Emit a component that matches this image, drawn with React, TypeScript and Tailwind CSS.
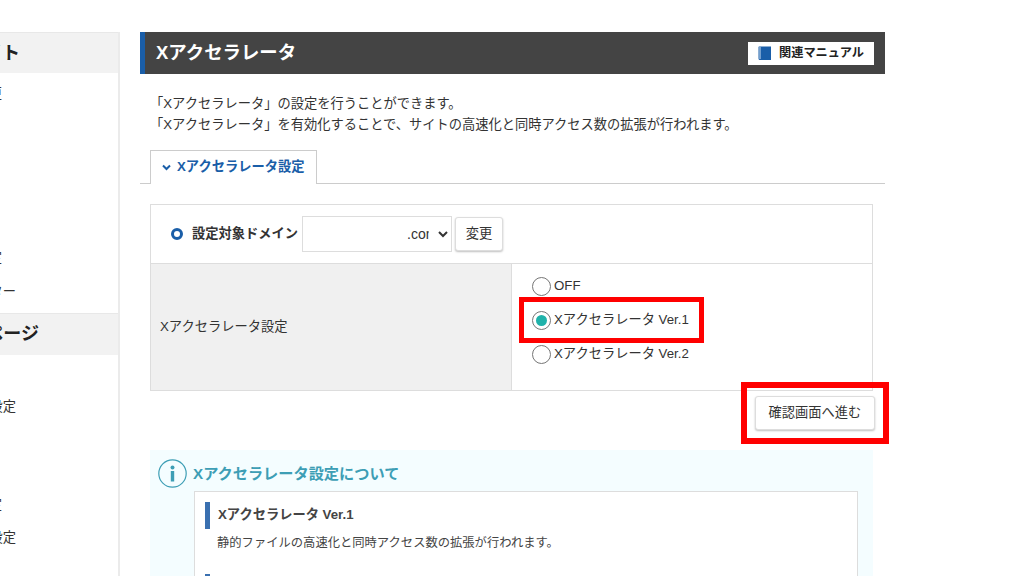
import React from 'react';

const font = 'font-["Liberation_Sans","Noto_Sans_CJK_JP",sans-serif]';

function SideHead({ text, right, tall }: { text: string; right: number; tall?: boolean }) {
  return (
    <div
      className={`flex items-center justify-end overflow-hidden whitespace-nowrap bg-[#f2f2f2] text-[18px] font-bold text-[#222] ${tall ? 'h-[41px]' : 'h-[40px]'}`}
      style={{ paddingRight: right }}
    >
      {text}
    </div>
  );
}

function SideItem({ text, right, className }: { text: string; right: number; className: string }) {
  return (
    <div
      className={`flex h-[20px] items-center justify-end overflow-hidden whitespace-nowrap text-[13.25px] text-[#333] ${className}`}
      style={{ paddingRight: right }}
    >
      {text}
    </div>
  );
}

function Radio({ label, checked }: { label: string; checked?: boolean }) {
  return (
    <label className="flex h-[20px] items-center gap-[3px] text-[13.25px] text-[#333]">
      <span className="flex h-[19px] w-[19px] items-center justify-center rounded-full border border-[#767676] bg-white">
        {checked && <span className="h-[11px] w-[11px] rounded-full bg-[#20b2aa]" />}
      </span>
      {label}
    </label>
  );
}

export default function App() {
  return (
    <div className={`flex h-[576px] w-[1024px] overflow-hidden bg-white ${font}`}>
      {/* sidebar, cut off at the left edge */}
      <aside className="mt-[32px] h-[544px] w-[120px] shrink-0 border-r-2 border-[#ebebeb]">
        <div className="border-t border-[#e8e8e8]">
          <SideHead text="サイト" right={98} />
        </div>
        <SideItem text="サイト変更" right={116} className="mt-[11px]" />
        <SideItem text="設定" right={116} className="mt-[144px]" />
        <SideItem text="アクセスフィルター" right={102} className="mt-[14px]" />
        <div className="mt-[11px] border-t border-[#e8e8e8]">
          <SideHead text="ホームページ" right={79} tall />
        </div>
        <SideItem text="簡単設定" right={102} className="mt-[42px]" />
        <SideItem text="設定" right={116} className="mt-[78px]" />
        <SideItem text="簡単設定" right={102} className="mt-[13px]" />
      </aside>

      <main className="ml-[20px] w-[745px] shrink-0 pt-[32px]">
        {/* title bar */}
        <div className="flex h-[42px] items-center justify-between border-l-[5px] border-[#1a5ea8] bg-[#444] pl-[11px] pr-[11px]">
          <h1 className="text-[18.4px] font-bold text-white">Xアクセラレータ</h1>
          <a className="flex h-[23px] w-[126px] items-center justify-center gap-[8px] bg-white text-[12.2px] font-bold text-[#222]">
            <svg width="13" height="14" viewBox="0 0 13 14">
              <path d="M1 .5h12V14H2a1.5 1.5 0 0 1-1.5-1.5V1A.5.5 0 0 1 1 .5z" fill="#1a5ea8" />
              <path d="M2 1v12" stroke="#cfe0f2" strokeWidth="1" />
            </svg>
            関連マニュアル
          </a>
        </div>

        <div className="ml-[10px] mt-[19px] text-[13.25px] leading-[21px] text-[#333]">
          <p>「Xアクセラレータ」の設定を行うことができます。</p>
          <p>「Xアクセラレータ」を有効化することで、サイトの高速化と同時アクセス数の拡張が行われます。</p>
        </div>

        {/* tab */}
        <div className="mt-[15px] h-[34px] border-b border-[#ccc] pl-[10px]">
          <div className="flex h-[34px] w-[167px] items-center gap-[6px] border-x border-t border-[#ccc] bg-white pl-[11px] text-[13.25px] font-bold text-[#1a5ea8]">
            <svg width="9" height="7" viewBox="0 0 9 7" fill="none" stroke="#1a5ea8" strokeWidth="2">
              <path d="M1 1.5l3.5 3.5L8 1.5" />
            </svg>
            <span className="relative top-[-1px]">Xアクセラレータ設定</span>
          </div>
        </div>

        {/* settings table */}
        <div className="ml-[10px] mt-[20px] w-[723px] border border-[#ddd]">
          <div className="flex h-[59px] items-center border-b border-[#ddd] pl-[20px]">
            <span className="h-[12px] w-[12px] rounded-full border-[3px] border-[#1a5ea8]" />
            <span className="ml-[9px] w-[107px] whitespace-nowrap text-[13.25px] font-bold text-[#333]">設定対象ドメイン</span>
            <select className="ml-[3px] h-[36px] w-[150px] border border-[#ddd] bg-white pl-[100px] pr-[6px] text-[14px] text-[#333]">
              <option>.com</option>
            </select>
            <button className="ml-[3px] h-[34px] w-[48px] rounded-[3px] border border-[#ddd] bg-white text-[13.25px] text-[#333] shadow-[0_1px_2px_rgba(0,0,0,0.25)]">
              変更
            </button>
          </div>
          <div className="flex h-[126px]">
            <div className="flex w-[361px] items-center border-r border-[#ddd] bg-[#f0f0f0] pl-[9px] text-[13.25px] text-[#333]">
              Xアクセラレータ設定
            </div>
            <div className="relative flex flex-col gap-[14px] pl-[20px] pt-[12px]">
              <Radio label="OFF" />
              <Radio label="Xアクセラレータ Ver.1" checked />
              <Radio label="Xアクセラレータ Ver.2" />
              <div className="absolute left-[7px] top-[33px] h-[46px] w-[185px] border-[5px] border-[#f00]" />
            </div>
          </div>
        </div>

        {/* submit */}
        <div className="relative mt-[5px] flex justify-end pr-[10px]">
          <button className="h-[34px] w-[120px] rounded-[3px] border border-[#ddd] bg-white text-[13.25px] text-[#333] shadow-[0_1px_2px_rgba(0,0,0,0.25)]">
            確認画面へ進む
          </button>
          <div className="absolute left-[601px] top-[-14px] h-[62px] w-[148px] border-[6px] border-[#f00]" />
        </div>

        {/* about box */}
        <div className="ml-[10px] mt-[20px] h-[200px] w-[723px] bg-[#f4fdff] pl-[8px] pt-[9px]">
          <div className="flex items-center gap-[6px]">
            <svg width="29" height="29" viewBox="0 0 29 29" fill="none">
              <circle cx="14.5" cy="14.5" r="13.7" stroke="#3d9eb5" strokeWidth="1.2" />
              <circle cx="14.5" cy="8.5" r="2" fill="#3d9eb5" />
              <rect x="12.8" y="12" width="3.4" height="10.5" fill="#3d9eb5" />
            </svg>
            <h2 className="relative top-[1px] text-[15.2px] font-bold text-[#3d9eb5]">Xアクセラレータ設定について</h2>
          </div>
          <div className="ml-[36px] mt-[3px] h-[200px] w-[664px] border border-[#ddd] bg-white pl-[10px] pt-[10px]">
            <h3 className="flex h-[27px] items-center border-l-[5px] border-[#3a70b0] pl-[8px] text-[13.25px] font-bold text-[#444]">
              <span className="relative top-[-1px]">Xアクセラレータ Ver.1</span>
            </h3>
            <p className="ml-[12px] mt-[4px] text-[12.3px] leading-[20px] text-[#444]">
              静的ファイルの高速化と同時アクセス数の拡張が行われます。
            </p>
            <div className="mt-[21px] h-[27px] border-l-[5px] border-[#3a70b0]" />
          </div>
        </div>
      </main>
    </div>
  );
}
